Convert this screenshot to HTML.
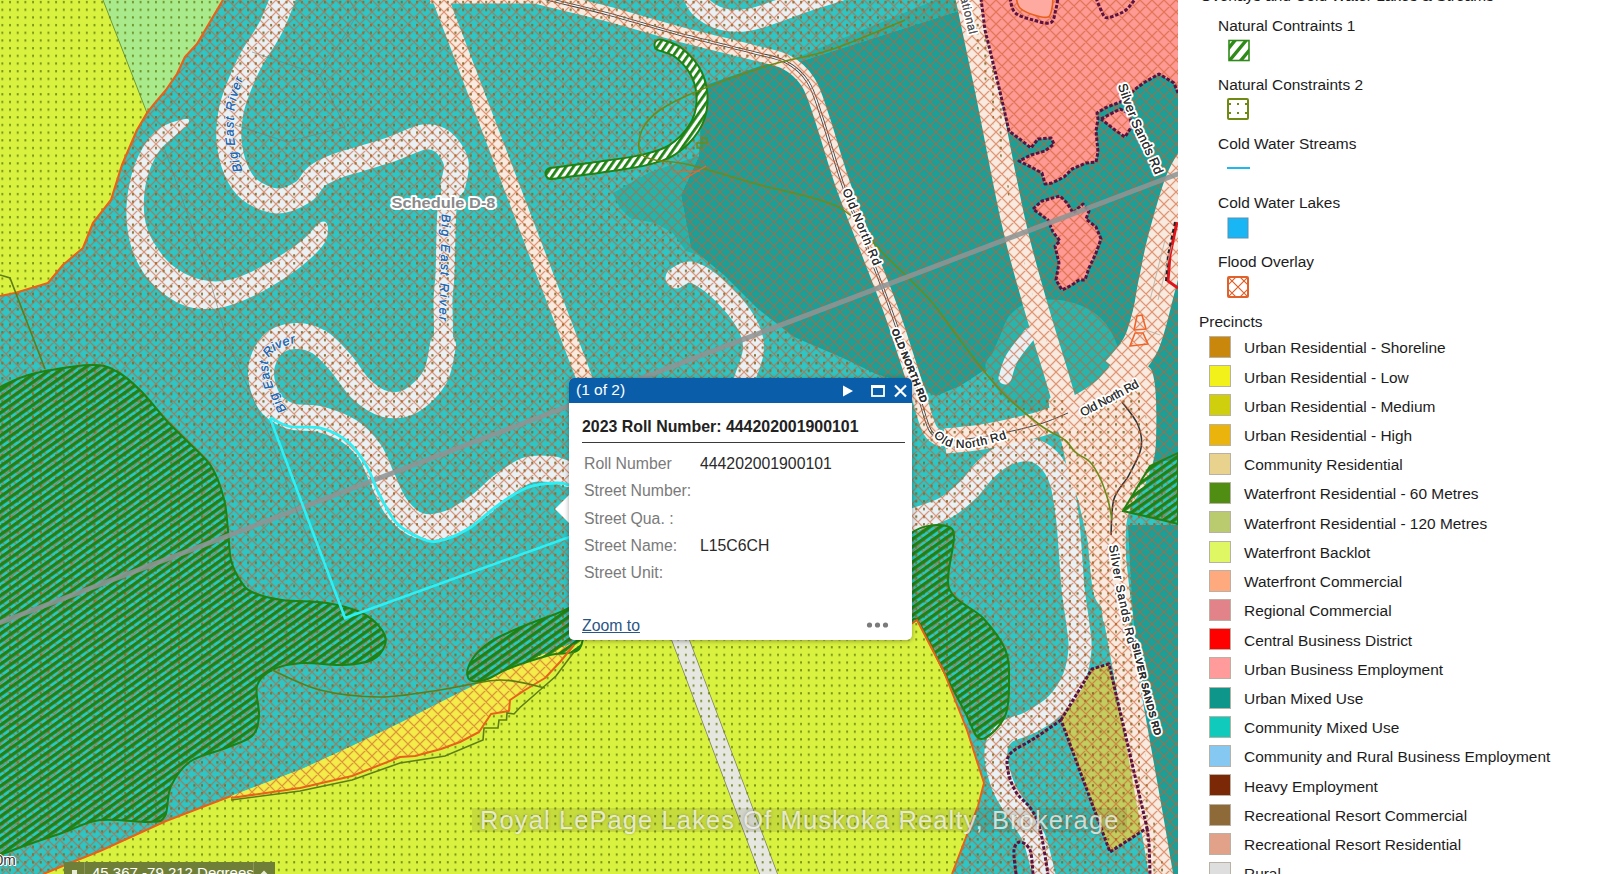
<!DOCTYPE html>
<html lang="en"><head><meta charset="utf-8"><title>Zoning Map</title>
<style>
html,body{margin:0;padding:0;background:#fff;}
body{width:1600px;height:874px;overflow:hidden;position:relative;font-family:"Liberation Sans",sans-serif;color:#1b1b1b;}
#map{position:absolute;left:0;top:0;width:1178px;height:874px;overflow:hidden;}
#map svg{display:block;}
#legend{position:absolute;left:1178px;top:0;width:422px;height:874px;background:#fff;overflow:hidden;}
#legend .t{position:absolute;white-space:nowrap;font-size:15.45px;line-height:18px;color:#1c1c1c;}
#legend .sw{position:absolute;width:20px;height:20px;border:1px solid #b9b2a4;box-sizing:content-box;}
#popup{position:absolute;left:569px;top:378px;width:343px;height:262px;background:#fff;border-radius:5px;box-shadow:0 1px 5px rgba(0,0,0,.35);}
#popup .hd{position:absolute;left:0;top:0;width:343px;height:25px;background:#0a5ea9;border-radius:5px 5px 0 0;color:#fff;}
#popup .hd span{position:absolute;left:7px;top:3px;font-size:15.5px;line-height:18px;}
#popup .ttl{position:absolute;left:13px;top:39.5px;font-size:15.9px;font-weight:bold;line-height:18px;color:#222;white-space:nowrap;}
#popup .hr{position:absolute;left:13px;top:63.5px;width:323px;height:1.2px;background:#3a3a3a;}
#popup .row{position:absolute;left:15px;font-size:15.8px;line-height:18px;color:#7a7a7a;white-space:nowrap;}
#popup .val{position:absolute;left:131px;font-size:15.8px;line-height:18px;color:#2a2a2a;white-space:nowrap;}
#popup .zoom{position:absolute;left:13px;top:239px;font-size:15.8px;line-height:18px;color:#2a5585;text-decoration:underline;}
#popup .dots{position:absolute;left:297px;top:243px;}
#ptr{position:absolute;left:554.5px;top:494.5px;width:0;height:0;border-top:14.5px solid transparent;border-bottom:14.5px solid transparent;border-right:14.5px solid #fff;}
#wm{position:absolute;left:472px;top:808px;height:24px;padding:0 8px;background:rgba(70,70,40,.13);font-size:25.5px;line-height:24px;color:rgba(255,255,255,.72);white-space:nowrap;letter-spacing:1.1px;text-shadow:0 0 3px rgba(90,90,60,.45);}
#coord{position:absolute;left:64px;top:862px;width:211px;height:14px;background:#6f7f38;color:#fff;font-size:15px;line-height:22px;}
#scale{position:absolute;left:-5px;top:851px;font-size:15px;color:#333;text-shadow:-1px 0 #fff,1px 0 #fff,0 1px #fff,0 -1px #fff,1px 1px #fff,-1px -1px #fff;}
</style></head><body>
<div id="map"><svg width="1178" height="874" viewBox="0 0 1178 874">
<defs>
<pattern id="hatch" width="12" height="12" patternUnits="userSpaceOnUse"><path d="M-1,-1L13,13M-1,13L13,-1M-1,11L1,13M11,-1L13,1M11,13L13,11M-1,1L1,-1" stroke="#8a6a5c" stroke-width="2.6" fill="none" stroke-opacity=".07"/><path d="M-1,-1L13,13M-1,13L13,-1M-1,11L1,13M11,-1L13,1M11,13L13,11M-1,1L1,-1" stroke="#d85a28" stroke-width="1.1" fill="none" stroke-opacity=".6"/></pattern>
<pattern id="dots" width="7.68" height="7.68" patternUnits="userSpaceOnUse" patternTransform="translate(-1.5,-2)"><rect x="3" y="3" width="1.7" height="2.2" fill="#5f7a0c" fill-opacity=".9"/></pattern>
<pattern id="dots2" width="7.68" height="7.68" patternUnits="userSpaceOnUse" patternTransform="translate(-1.5,-2)"><rect x="3" y="3" width="1.7" height="2.2" fill="#a4583a" fill-opacity=".6"/></pattern>
<pattern id="gstripe" width="6.2" height="6.2" patternUnits="userSpaceOnUse" patternTransform="rotate(-35.5)"><rect x="0" y="0" width="6.2" height="3.3" fill="#1f8212"/></pattern>
<pattern id="gstripe2" width="6" height="6" patternUnits="userSpaceOnUse" patternTransform="rotate(-55)"><rect x="0" y="0" width="6" height="6" fill="#fff"/><rect x="0" y="0" width="6" height="2.8" fill="#1f8212"/></pattern>
<clipPath id="flood"><path d="M223.0,0.0 L210.0,22.0 L197.0,44.0 L185.0,57.0 L177.0,74.0 L166.0,90.0 L155.0,103.0 L147.0,113.0 L137.0,130.0 L122.0,165.0 L111.0,200.0 L93.0,223.0 L83.0,248.0 L63.0,265.0 L48.0,283.0 L15.0,293.0 L0.0,296.0 L0,874 L43,874 L70.0,863.0 L100.0,851.0 L166.0,821.0 L231.0,796.0 L231.0,798.0 L300.0,788.0 L352.0,776.0 L400.0,757.0 L415.0,756.0 L441.0,749.0 L460.0,742.0 L479.0,732.0 L485.0,723.0 L491.0,714.0 L509.0,711.0 L510.0,700.0 L525.0,690.0 L545.0,678.0 L560.0,662.0 L574.0,645.0 L585,634 L905,628 L917.0,620.0 L944.0,672.0 L967.0,730.0 L984.0,783.0 L978.0,806.0 L952.0,874.0 L1178,874 L1178,0 Z"/></clipPath>
<mask id="nodots" maskUnits="userSpaceOnUse" x="0" y="0" width="1178" height="874"><rect x="0" y="0" width="1178" height="874" fill="#fff"/><path d="M699.0,156.0 L703.0,86.0 L769.0,63.0 L802.0,61.0 L968.0,8.0 L987.0,90.0 L1013.0,220.0 L1034.0,300.0 L1058.0,380.0 L1062.0,395.0 L1010.0,400.0 L986.0,369.0 L960.0,386.0 L936.0,396.0 L912.0,385.0 L876.0,374.0 L843.0,358.0 L794.0,337.0 L757.0,308.0 L724.0,275.0 L701.0,256.0 L691.0,248.0 L681.0,195.0Z" fill="#000"/><path d="M613.0,193.0 L650.0,172.0 L699.0,156.0 L681.0,195.0 L691.0,248.0 L701.0,256.0 L686.0,251.0 L673.0,233.0 L655.0,223.0 L630.0,218.0 L620.0,208.0Z" fill="#000"/><path d="M966.0,-5.0 L1178.0,-5.0 L1178.0,93.0 L1174.0,83.0 L1159.0,74.0 L1145.0,82.0 L1134.0,90.0 L1125.0,100.0 L1105.0,108.0 L1097.0,113.0 L1098.0,119.0 L1096.0,131.0 L1098.0,152.0 L1096.0,162.0 L1086.0,163.0 L1072.0,169.0 L1064.0,177.0 L1052.0,183.0 L1045.0,184.0 L1042.0,173.0 L1031.0,167.0 L1019.0,161.0 L1031.0,155.0 L1045.0,151.0 L1054.0,144.0 L1051.0,138.0 L1038.0,139.0 L1031.0,148.0 L1021.0,140.0 L1009.0,131.0 L999.6,90.0 L985.0,30.0Z" fill="#000"/><path d="M1101.0,119.0 L1120.0,109.0 L1129.0,113.0 L1132.0,126.0 L1125.0,137.0 L1115.0,130.0Z" fill="#000"/><path d="M1033.0,209.0 L1042.0,201.0 L1060.0,196.0 L1067.0,203.0 L1073.0,213.0 L1083.0,204.0 L1089.0,211.0 L1086.0,219.0 L1096.0,227.0 L1101.0,239.0 L1096.0,253.0 L1089.0,268.0 L1085.0,280.0 L1079.0,280.0 L1072.0,285.0 L1062.0,290.0 L1056.0,280.0 L1059.0,263.0 L1055.0,246.0 L1060.0,241.0 L1053.0,232.0 L1048.0,220.0Z" fill="#000"/><path d="M1000.0,120.0 L1178.0,60.0 L1178.0,440.0 L1150.0,440.0 L1140.0,380.0 L1120.0,395.0 L1085.0,415.0 L1073.0,440.0 L1058.0,380.0 L1034.0,300.0 L1013.0,220.0Z" fill="#000"/><path d="M1150.0,380.0 L1178.0,380.0 L1178.0,460.0 L1150.0,462.0Z" fill="#000"/><path d="M1128.0,525.0 L1178.0,525.0 L1178.0,874.0 L1165.0,874.0 L1150.0,800.0 L1140.0,700.0 L1132.0,600.0Z" fill="#000"/><path d="M231.0,796.0 L302.0,769.0 L352.0,746.0 L400.0,723.0 L443.0,701.0 L483.0,681.0 L523.0,663.0 L553.0,650.0 L574.0,643.0 L585.0,634.0 L574.0,645.0 L560.0,662.0 L545.0,678.0 L525.0,690.0 L510.0,700.0 L509.0,711.0 L491.0,714.0 L485.0,723.0 L479.0,732.0 L460.0,742.0 L441.0,749.0 L415.0,756.0 L400.0,757.0 L352.0,776.0 L300.0,788.0 L231.0,798.0Z" fill="#000"/></mask>
</defs>
<rect x="0" y="0" width="1178" height="874" fill="#2ec5c4"/>
<path d="M699.0,156.0 L703.0,86.0 L769.0,63.0 L802.0,61.0 L968.0,8.0 L987.0,90.0 L1013.0,220.0 L1034.0,300.0 L1058.0,380.0 L1062.0,395.0 L1010.0,400.0 L986.0,369.0 L960.0,386.0 L936.0,396.0 L912.0,385.0 L876.0,374.0 L843.0,358.0 L794.0,337.0 L757.0,308.0 L724.0,275.0 L701.0,256.0 L691.0,248.0 L681.0,195.0Z" fill="#1b9f97"/>
<path d="M1000.0,120.0 L1178.0,60.0 L1178.0,440.0 L1150.0,440.0 L1140.0,380.0 L1120.0,395.0 L1085.0,415.0 L1073.0,440.0 L1058.0,380.0 L1034.0,300.0 L1013.0,220.0Z" fill="#1b9f97"/>
<path d="M1150.0,380.0 L1178.0,380.0 L1178.0,460.0 L1150.0,462.0Z" fill="#1b9f97"/>
<path d="M1128.0,525.0 L1178.0,525.0 L1178.0,874.0 L1165.0,874.0 L1150.0,800.0 L1140.0,700.0 L1132.0,600.0Z" fill="#1b9f97"/>
<path d="M613.0,193.0 L650.0,172.0 L699.0,156.0 L681.0,195.0 L691.0,248.0 L701.0,256.0 L686.0,251.0 L673.0,233.0 L655.0,223.0 L630.0,218.0 L620.0,208.0Z" fill="#25b3ab"/>
<path d="M986.0,369.0 C983.2,360.7 990.7,357.5 993.0,352.0 C995.3,346.5 997.2,342.2 1000.0,336.0 C1002.8,329.8 1005.0,320.7 1010.0,315.0 C1015.0,309.3 1021.7,304.5 1030.0,302.0 C1038.3,299.5 1050.0,298.7 1060.0,300.0 C1070.0,301.3 1081.7,305.0 1090.0,310.0 C1098.3,315.0 1105.0,321.7 1110.0,330.0 C1115.0,338.3 1119.7,349.2 1120.0,360.0 C1120.3,370.8 1117.8,385.8 1112.0,395.0 C1106.2,404.2 1093.3,410.8 1085.0,415.0 C1076.7,419.2 1074.5,422.2 1062.0,420.0 C1049.5,417.8 1022.7,410.5 1010.0,402.0 C997.3,393.5 988.8,377.3 986.0,369.0Z" fill="#27b5ad"/>
<path d="M786,62L802,61L968,8L966,-2L940,-2Z" fill="#25b3ad"/>
<path d="M0.0,0.0 L103.0,0.0 L147.0,113.0 L137.0,130.0 L122.0,165.0 L111.0,200.0 L93.0,223.0 L83.0,248.0 L63.0,265.0 L48.0,283.0 L15.0,293.0 L0.0,296.0Z" fill="#d9f240"/>
<path d="M103.0,0.0 L223.0,0.0 L210.0,22.0 L197.0,44.0 L185.0,57.0 L177.0,74.0 L166.0,90.0 L155.0,103.0 L147.0,113.0Z" fill="#a9ea8c"/>
<path d="M43.0,874.0 L70.0,863.0 L100.0,851.0 L166.0,821.0 L231.0,796.0 L302.0,769.0 L352.0,746.0 L400.0,723.0 L443.0,701.0 L483.0,681.0 L523.0,663.0 L553.0,650.0 L574.0,643.0 L585.0,634.0 L905,628 L917.0,620.0 L944.0,672.0 L967.0,730.0 L984.0,783.0 L978.0,806.0 L952.0,874.0 Z" fill="#d9f240"/>
<path d="M231.0,796.0 L302.0,769.0 L352.0,746.0 L400.0,723.0 L443.0,701.0 L483.0,681.0 L523.0,663.0 L553.0,650.0 L574.0,643.0 L585.0,634.0 L574.0,645.0 L560.0,662.0 L545.0,678.0 L525.0,690.0 L510.0,700.0 L509.0,711.0 L491.0,714.0 L485.0,723.0 L479.0,732.0 L460.0,742.0 L441.0,749.0 L415.0,756.0 L400.0,757.0 L352.0,776.0 L300.0,788.0 L231.0,798.0 Z" fill="#f4ec48"/>
<path d="M103,0L147,113" stroke="#5f7d14" stroke-width="1" stroke-opacity=".7" fill="none"/>
<path d="M966.0,-5.0 L1178.0,-5.0 L1178.0,93.0 L1174.0,83.0 L1159.0,74.0 L1145.0,82.0 L1134.0,90.0 L1125.0,100.0 L1105.0,108.0 L1097.0,113.0 L1098.0,119.0 L1096.0,131.0 L1098.0,152.0 L1096.0,162.0 L1086.0,163.0 L1072.0,169.0 L1064.0,177.0 L1052.0,183.0 L1045.0,184.0 L1042.0,173.0 L1031.0,167.0 L1019.0,161.0 L1031.0,155.0 L1045.0,151.0 L1054.0,144.0 L1051.0,138.0 L1038.0,139.0 L1031.0,148.0 L1021.0,140.0 L1009.0,131.0 L999.6,90.0 L985.0,30.0Z" fill="#fe9a93"/>
<path d="M1101.0,119.0 L1120.0,109.0 L1129.0,113.0 L1132.0,126.0 L1125.0,137.0 L1115.0,130.0Z" fill="#fe9a93"/>
<path d="M1033.0,209.0 L1042.0,201.0 L1060.0,196.0 L1067.0,203.0 L1073.0,213.0 L1083.0,204.0 L1089.0,211.0 L1086.0,219.0 L1096.0,227.0 L1101.0,239.0 L1096.0,253.0 L1089.0,268.0 L1085.0,280.0 L1079.0,280.0 L1072.0,285.0 L1062.0,290.0 L1056.0,280.0 L1059.0,263.0 L1055.0,246.0 L1060.0,241.0 L1053.0,232.0 L1048.0,220.0Z" fill="#fe9a93"/>
<path d="M1061.0,720.0 L1092.0,669.0 L1109.0,664.0 L1147.0,828.0 L1110.0,852.0Z" fill="#c3cc5e"/>
<path d="M439,-5L585,380" stroke="#f8eadf" stroke-width="16" fill="none"/>
<path d="M676,628L770.5,879" stroke="#7d8060" stroke-width="17.5" fill="none"/>
<path d="M676,628L770.5,879" stroke="#e6e7e0" stroke-width="16" fill="none"/>
<path d="M185.6,118.9 C181.0,119.5 167.6,122.9 160.4,127.7 C153.2,132.5 147.5,139.9 142.7,147.9 C137.9,155.9 134.1,164.7 131.4,175.6 C128.7,186.5 126.2,200.8 126.4,213.4 C126.6,226.0 128.7,239.8 132.7,251.1 C136.7,262.4 142.3,272.6 150.3,281.4 C158.3,290.2 170.4,299.4 180.5,304.0 C190.6,308.6 200.7,309.4 210.8,309.0 C220.9,308.6 230.9,305.3 241.0,301.5 C251.1,297.7 261.1,292.3 271.2,286.4 C281.3,280.5 292.6,273.3 301.4,266.2 C310.2,259.1 319.7,250.3 324.1,243.6 C328.5,236.9 328.2,229.5 327.6,226.0 C327.0,222.5 324.7,219.9 320.3,222.4 C315.9,224.9 309.6,234.5 301.4,241.0 C293.2,247.5 281.3,255.3 271.2,261.2 C261.1,267.1 250.2,272.9 241.0,276.3 C231.8,279.7 224.2,281.4 215.8,281.4 C207.4,281.4 198.6,279.7 190.6,276.3 C182.6,272.9 174.6,267.9 167.9,261.2 C161.2,254.5 154.3,244.4 150.3,236.0 C146.3,227.6 144.6,220.0 144.0,210.8 C143.4,201.6 144.2,190.2 146.5,180.6 C148.8,170.9 153.1,160.4 157.9,152.9 C162.7,145.4 170.5,140.1 175.5,135.3 C180.5,130.5 186.1,126.9 187.8,124.2 C189.5,121.5 190.2,118.3 185.6,118.9Z" fill="#e9f1f5"/>
<path d="M286.0,-10.0 C283.5,-3.8 276.8,15.3 271.0,27.0 C265.2,38.7 256.5,49.7 251.0,60.0 C245.5,70.3 241.3,80.3 238.0,89.0 C234.7,97.7 232.5,103.5 231.0,112.0 C229.5,120.5 228.2,130.3 229.0,140.0 C229.8,149.7 232.5,161.7 236.0,170.0 C239.5,178.3 243.2,184.8 250.0,190.0 C256.8,195.2 268.2,200.7 277.0,201.0 C285.8,201.3 296.3,196.2 303.0,192.0 C309.7,187.8 311.3,180.3 317.0,176.0 C322.7,171.7 329.8,168.8 337.0,166.0 C344.2,163.2 350.8,161.8 360.0,159.0 C369.2,156.2 381.3,152.7 392.0,149.0 C402.7,145.3 415.5,138.2 424.0,137.0 C432.5,135.8 437.7,137.8 443.0,142.0 C448.3,146.2 454.3,154.8 456.0,162.0 C457.7,169.2 453.5,181.2 453.0,185.0" stroke="#e9f1f5" stroke-width="25" fill="none" stroke-linecap="round" stroke-linejoin="round"/>
<path d="M456.0,162.0 C455.5,165.8 454.5,177.0 453.0,185.0 C451.5,193.0 448.3,195.2 447.0,210.0 C445.7,224.8 445.7,259.0 445.0,274.0 C444.3,289.0 443.3,288.2 443.0,300.0 C442.7,311.8 444.3,332.2 443.0,345.0 C441.7,357.8 436.3,371.7 435.0,377.0" stroke="#e9f1f5" stroke-width="19" fill="none" stroke-linecap="round" stroke-linejoin="round"/>
<path d="M443.0,345.0 C441.7,350.3 440.3,367.7 435.0,377.0 C429.7,386.3 419.3,396.5 411.0,401.0 C402.7,405.5 393.3,406.0 385.0,404.0 C376.7,402.0 368.5,396.0 361.0,389.0 C353.5,382.0 347.0,369.8 340.0,362.0 C333.0,354.2 326.5,346.3 319.0,342.0 C311.5,337.7 302.8,335.5 295.0,336.0 C287.2,336.5 277.7,339.2 272.0,345.0 C266.3,350.8 261.5,361.7 261.0,371.0 C260.5,380.3 264.2,393.5 269.0,401.0 C273.8,408.5 281.7,413.0 290.0,416.0 C298.3,419.0 309.2,416.5 319.0,419.0 C328.8,421.5 340.5,425.5 349.0,431.0 C357.5,436.5 364.5,444.2 370.0,452.0 C375.5,459.8 377.5,468.7 382.0,478.0 C386.5,487.3 390.7,500.0 397.0,508.0 C403.3,516.0 411.2,523.5 420.0,526.0 C428.8,528.5 440.0,526.5 450.0,523.0 C460.0,519.5 471.0,511.5 480.0,505.0 C489.0,498.5 496.0,489.8 504.0,484.0 C512.0,478.2 520.2,472.5 528.0,470.0 C535.8,467.5 544.2,468.3 551.0,469.0 C557.8,469.7 560.8,472.5 569.0,474.0 C577.2,475.5 594.8,477.3 600.0,478.0" stroke="#e9f1f5" stroke-width="26" fill="none" stroke-linecap="round" stroke-linejoin="round"/>
<path d="M690.0,-14.0 C691.7,-10.7 694.7,0.5 700.0,6.0 C705.3,11.5 714.0,16.7 722.0,19.0 C730.0,21.3 739.2,21.2 748.0,20.0 C756.8,18.8 765.5,15.2 775.0,12.0 C784.5,8.8 794.2,4.7 805.0,1.0 C815.8,-2.7 834.2,-8.2 840.0,-10.0" stroke="#e9f1f5" stroke-width="22" fill="none" stroke-linecap="round" stroke-linejoin="round"/>
<path d="M676.0,278.0 C678.3,277.0 684.2,271.2 690.0,272.0 C695.8,272.8 703.3,277.0 711.0,283.0 C718.7,289.0 729.3,299.7 736.0,308.0 C742.7,316.3 748.2,325.5 751.0,333.0 C753.8,340.5 754.0,345.5 753.0,353.0 C752.0,360.5 747.5,370.2 745.0,378.0 C742.5,385.8 739.2,396.3 738.0,400.0" stroke="#e9f1f5" stroke-width="21" fill="none" stroke-linecap="round" stroke-linejoin="round"/>
<path d="M900.0,524.0 C902.2,523.3 905.5,522.7 913.0,520.0 C920.5,517.3 935.8,513.0 945.0,508.0 C954.2,503.0 961.2,496.5 968.0,490.0 C974.8,483.5 979.5,475.0 986.0,469.0 C992.5,463.0 999.5,457.2 1007.0,454.0 C1014.5,450.8 1024.0,449.0 1031.0,450.0 C1038.0,451.0 1044.0,454.8 1049.0,460.0 C1054.0,465.2 1058.0,472.0 1061.0,481.0 C1064.0,490.0 1065.5,503.0 1067.0,514.0 C1068.5,525.0 1069.0,534.7 1070.0,547.0 C1071.0,559.3 1071.7,575.0 1073.0,588.0 C1074.3,601.0 1076.8,614.8 1078.0,625.0 C1079.2,635.2 1080.7,640.2 1080.0,649.0 C1079.3,657.8 1077.8,668.8 1074.0,678.0 C1070.2,687.2 1064.2,696.7 1057.0,704.0 C1049.8,711.3 1039.7,717.2 1031.0,722.0 C1022.3,726.8 1010.8,728.2 1005.0,733.0 C999.2,737.8 996.5,742.7 996.0,751.0 C995.5,759.3 998.7,773.3 1002.0,783.0 C1005.3,792.7 1010.7,799.8 1016.0,809.0 C1021.3,818.2 1029.2,826.2 1034.0,838.0 C1038.8,849.8 1043.2,873.0 1045.0,880.0" stroke="#e9f1f5" stroke-width="23" fill="none" stroke-linecap="round" stroke-linejoin="round"/>
<path d="M1030.0,334.0 C1027.0,338.0 1016.2,350.7 1012.0,358.0 C1007.8,365.3 1006.2,374.7 1005.0,378.0" stroke="#e9f1f5" stroke-width="13" fill="none" stroke-linecap="round" stroke-linejoin="round"/>
<path d="M964.0,-16.0 C964.7,-13.3 964.2,-17.7 968.0,0.0 C971.8,17.7 979.5,53.3 987.0,90.0 C994.5,126.7 1005.2,185.0 1013.0,220.0 C1020.8,255.0 1026.5,273.3 1034.0,300.0 C1041.5,326.7 1051.2,356.7 1058.0,380.0 C1064.8,403.3 1070.0,421.7 1075.0,440.0 C1080.0,458.3 1083.5,471.7 1088.0,490.0 C1092.5,508.3 1097.3,528.3 1102.0,550.0 C1106.7,571.7 1110.7,591.7 1116.0,620.0 C1121.3,648.3 1128.3,688.3 1134.0,720.0 C1139.7,751.7 1145.3,783.3 1150.0,810.0 C1154.7,836.7 1160.0,868.3 1162.0,880.0" stroke="#f8eadf" stroke-width="24" fill="none"/>
<path d="M1118.0,395.0 C1119.2,400.8 1124.3,417.5 1125.0,430.0 C1125.7,442.5 1124.2,457.5 1122.0,470.0 C1119.8,482.5 1114.0,492.5 1112.0,505.0 C1110.0,517.5 1109.0,525.8 1110.0,545.0 C1111.0,564.2 1116.7,607.5 1118.0,620.0" stroke="#f8eadf" stroke-width="30" fill="none"/>
<path d="M945.0,441.0 C950.0,440.5 965.3,439.3 975.0,438.0 C984.7,436.7 992.2,435.3 1003.0,433.0 C1013.8,430.7 1029.2,427.3 1040.0,424.0 C1050.8,420.7 1056.7,419.2 1068.0,413.0 C1079.3,406.8 1096.3,398.8 1108.0,387.0 C1119.7,375.2 1130.8,359.5 1138.0,342.0 C1145.2,324.5 1147.3,299.0 1151.0,282.0 C1154.7,265.0 1155.5,257.0 1160.0,240.0 C1164.5,223.0 1172.2,195.0 1178.0,180.0 C1183.8,165.0 1192.2,155.0 1195.0,150.0" stroke="#f8eadf" stroke-width="25" fill="none"/>
<path d="M1120.0,372.0 C1123.7,367.0 1135.7,356.5 1142.0,342.0 C1148.3,327.5 1153.0,302.8 1158.0,285.0 C1163.0,267.2 1165.0,251.7 1172.0,235.0 C1179.0,218.3 1195.3,193.3 1200.0,185.0" stroke="#f8eadf" stroke-width="36" fill="none"/>
<path d="M520.0,-8.0 C525.2,-6.7 536.3,-3.7 551.0,0.0 C565.7,3.7 586.7,8.3 608.0,14.0 C629.3,19.7 655.2,27.7 679.0,34.0 C702.8,40.3 733.2,47.3 751.0,52.0 C768.8,56.7 776.5,57.0 786.0,62.0 C795.5,67.0 802.0,72.7 808.0,82.0 C814.0,91.3 816.2,100.8 822.0,118.0 C827.8,135.2 835.3,163.0 843.0,185.0 C850.7,207.0 859.7,228.2 868.0,250.0 C876.3,271.8 884.8,292.7 893.0,316.0 C901.2,339.3 910.8,371.0 917.0,390.0 C923.2,409.0 925.3,421.5 930.0,430.0 C934.7,438.5 942.5,439.2 945.0,441.0" stroke="#f8eadf" stroke-width="15" fill="none"/>
<path d="M1049.0,400.0 C1051.3,392.5 1064.8,397.5 1075.0,395.0 C1085.2,392.5 1097.5,389.5 1110.0,385.0 C1122.5,380.5 1142.3,358.8 1150.0,368.0 C1157.7,377.2 1156.5,421.3 1156.0,440.0 C1155.5,458.7 1151.8,466.7 1147.0,480.0 C1142.2,493.3 1130.8,500.0 1127.0,520.0 C1123.2,540.0 1129.2,586.7 1124.0,600.0 C1118.8,613.3 1102.5,613.3 1096.0,600.0 C1089.5,586.7 1089.3,540.0 1085.0,520.0 C1080.7,500.0 1074.0,493.3 1070.0,480.0 C1066.0,466.7 1064.5,453.3 1061.0,440.0 C1057.5,426.7 1046.7,407.5 1049.0,400.0Z" fill="#f8eadf"/>
<path d="M430,0L556,0" stroke="#f8eadf" stroke-width="7" fill="none"/>
<path d="M520.0,-8.0 C525.2,-6.7 536.3,-3.7 551.0,0.0 C565.7,3.7 586.7,8.3 608.0,14.0 C629.3,19.7 655.2,27.7 679.0,34.0 C702.8,40.3 733.2,47.3 751.0,52.0 C768.8,56.7 776.5,57.0 786.0,62.0 C795.5,67.0 802.0,72.7 808.0,82.0 C814.0,91.3 816.2,100.8 822.0,118.0 C827.8,135.2 835.3,163.0 843.0,185.0 C850.7,207.0 859.7,228.2 868.0,250.0 C876.3,271.8 884.8,292.7 893.0,316.0 C901.2,339.3 910.8,371.0 917.0,390.0 C923.2,409.0 925.3,421.5 930.0,430.0 C934.7,438.5 942.5,439.2 945.0,441.0" stroke="#3a3a3a" stroke-width="3" fill="none"/>
<path d="M520.0,-8.0 C525.2,-6.7 536.3,-3.7 551.0,0.0 C565.7,3.7 586.7,8.3 608.0,14.0 C629.3,19.7 655.2,27.7 679.0,34.0 C702.8,40.3 733.2,47.3 751.0,52.0 C768.8,56.7 776.5,57.0 786.0,62.0 C795.5,67.0 802.0,72.7 808.0,82.0 C814.0,91.3 816.2,100.8 822.0,118.0 C827.8,135.2 835.3,163.0 843.0,185.0 C850.7,207.0 859.7,228.2 868.0,250.0 C876.3,271.8 884.8,292.7 893.0,316.0 C901.2,339.3 910.8,371.0 917.0,390.0 C923.2,409.0 925.3,421.5 930.0,430.0 C934.7,438.5 942.5,439.2 945.0,441.0" stroke="#f3f3f3" stroke-width="1.4" fill="none"/>
<path d="M945.0,441.0 C950.0,440.5 965.3,439.3 975.0,438.0 C984.7,436.7 992.2,435.3 1003.0,433.0 C1013.8,430.7 1029.2,427.3 1040.0,424.0 C1050.8,420.7 1063.3,414.8 1068.0,413.0" stroke="#444" stroke-width="1" fill="none"/>
<path d="M1122.0,402.0 C1124.7,405.8 1134.8,417.3 1138.0,425.0 C1141.2,432.7 1142.5,439.7 1141.0,448.0 C1139.5,456.3 1133.5,466.5 1129.0,475.0 C1124.5,483.5 1117.0,489.0 1114.0,499.0 C1111.0,509.0 1111.5,529.0 1111.0,535.0" stroke="#333" stroke-width="1.6" fill="none"/>
<rect x="0" y="0" width="1178" height="874" fill="url(#dots)" mask="url(#nodots)"/>
<g clip-path="url(#flood)"><rect x="0" y="0" width="1178" height="874" fill="url(#dots2)" mask="url(#nodots)"/></g>
<rect x="0" y="0" width="1178" height="874" fill="url(#hatch)" clip-path="url(#flood)"/>
<path d="M0.0,387.0 C5.3,384.8 17.0,377.7 32.0,374.0 C47.0,370.3 76.0,365.5 90.0,365.0 C104.0,364.5 107.5,366.7 116.0,371.0 C124.5,375.3 132.7,382.8 141.0,391.0 C149.3,399.2 158.5,411.8 166.0,420.0 C173.5,428.2 178.5,432.3 186.0,440.0 C193.5,447.7 204.7,456.2 211.0,466.0 C217.3,475.8 221.2,488.3 224.0,499.0 C226.8,509.7 226.8,519.8 228.0,530.0 C229.2,540.2 229.0,551.7 231.0,560.0 C233.0,568.3 236.5,574.7 240.0,580.0 C243.5,585.3 245.0,588.7 252.0,592.0 C259.0,595.3 269.5,598.2 282.0,600.0 C294.5,601.8 313.7,600.8 327.0,603.0 C340.3,605.2 352.8,608.5 362.0,613.0 C371.2,617.5 378.2,624.7 382.0,630.0 C385.8,635.3 386.7,640.0 385.0,645.0 C383.3,650.0 379.2,656.7 372.0,660.0 C364.8,663.3 353.7,664.5 342.0,665.0 C330.3,665.5 313.7,662.2 302.0,663.0 C290.3,663.8 279.5,666.2 272.0,670.0 C264.5,673.8 259.2,678.3 257.0,686.0 C254.8,693.7 259.8,707.7 259.0,716.0 C258.2,724.3 257.5,730.7 252.0,736.0 C246.5,741.3 236.2,743.8 226.0,748.0 C215.8,752.2 200.2,754.7 191.0,761.0 C181.8,767.3 175.3,776.8 171.0,786.0 C166.7,795.2 168.5,810.0 165.0,816.0 C161.5,822.0 160.8,821.3 150.0,822.0 C139.2,822.7 114.7,818.2 100.0,820.0 C85.3,821.8 74.7,828.7 62.0,833.0 C49.3,837.3 34.3,842.3 24.0,846.0 C13.7,849.7 4.0,853.5 0.0,855.0 L-6,858 L-6,387 Z" fill="url(#gstripe)" stroke="#1f8212" stroke-width="2"/>
<path d="M468.0,668.0 C469.7,663.0 474.2,655.5 480.0,650.0 C485.8,644.5 490.8,640.8 503.0,635.0 C515.2,629.2 540.2,619.5 553.0,615.0 C565.8,610.5 575.5,602.5 580.0,608.0 C584.5,613.5 585.0,640.2 580.0,648.0 C575.0,655.8 561.7,651.7 550.0,655.0 C538.3,658.3 520.8,663.8 510.0,668.0 C499.2,672.2 491.7,678.0 485.0,680.0 C478.3,682.0 472.8,682.0 470.0,680.0 C467.2,678.0 466.3,673.0 468.0,668.0Z" fill="url(#gstripe)" stroke="#1f8212" stroke-width="2"/>
<path d="M905.0,541.0 C912.8,524.5 944.7,521.2 952.0,529.0 C959.3,536.8 943.8,573.2 949.0,588.0 C954.2,602.8 973.7,607.8 983.0,618.0 C992.3,628.2 1000.7,639.0 1005.0,649.0 C1009.3,659.0 1009.0,666.8 1009.0,678.0 C1009.0,689.2 1009.7,705.8 1005.0,716.0 C1000.3,726.2 987.7,739.7 981.0,739.0 C974.3,738.3 971.2,723.2 965.0,712.0 C958.8,700.8 952.0,687.3 944.0,672.0 C936.0,656.7 923.5,627.3 917.0,620.0 C910.5,612.7 907.0,641.2 905.0,628.0 C903.0,614.8 897.2,557.5 905.0,541.0Z" fill="url(#gstripe)" stroke="#1f8212" stroke-width="2"/>
<path d="M1123.0,511.0 L1150.0,466.0 L1178.0,453.0 L1178.0,524.0 L1162.0,520.0Z" fill="url(#gstripe)" stroke="#1f8212" stroke-width="2"/>
<path d="M551.0,173.5 C559.3,172.4 585.5,169.2 601.0,167.0 C616.5,164.8 632.2,162.8 644.0,160.0 C655.8,157.2 663.7,155.3 672.0,150.0 C680.3,144.7 689.0,135.8 694.0,128.0 C699.0,120.2 701.5,111.8 702.0,103.0 C702.5,94.2 700.8,83.3 697.0,75.0 C693.2,66.7 685.2,58.0 679.0,53.0 C672.8,48.0 663.2,46.3 660.0,45.0" stroke="#1f8212" stroke-width="13" fill="none" stroke-linecap="round"/>
<path d="M551.0,173.5 C559.3,172.4 585.5,169.2 601.0,167.0 C616.5,164.8 632.2,162.8 644.0,160.0 C655.8,157.2 663.7,155.3 672.0,150.0 C680.3,144.7 689.0,135.8 694.0,128.0 C699.0,120.2 701.5,111.8 702.0,103.0 C702.5,94.2 700.8,83.3 697.0,75.0 C693.2,66.7 685.2,58.0 679.0,53.0 C672.8,48.0 663.2,46.3 660.0,45.0" stroke="url(#gstripe2)" stroke-width="9" fill="none" stroke-linecap="round"/>
<path d="M223.0,0.0 L210.0,22.0 L197.0,44.0 L185.0,57.0 L177.0,74.0 L166.0,90.0 L155.0,103.0 L147.0,113.0 L137.0,130.0 L122.0,165.0 L111.0,200.0 L93.0,223.0 L83.0,248.0 L63.0,265.0 L48.0,283.0 L15.0,293.0 L0.0,296.0" stroke="#e8601a" stroke-width="2.2" fill="none" stroke-linejoin="round"/>
<path d="M43.0,874.0 L70.0,863.0 L100.0,851.0 L166.0,821.0 L231.0,796.0" stroke="#e8601a" stroke-width="2.2" fill="none" stroke-linejoin="round"/>
<path d="M231.0,798.0 L300.0,788.0 L352.0,776.0 L400.0,757.0 L415.0,756.0 L441.0,749.0 L460.0,742.0 L479.0,732.0 L485.0,723.0 L491.0,714.0 L509.0,711.0 L510.0,700.0 L525.0,690.0 L545.0,678.0 L560.0,662.0 L574.0,645.0" stroke="#e8601a" stroke-width="2" fill="none" stroke-linejoin="round"/>
<path d="M905.0,628.0 L917.0,620.0 L944.0,672.0 L967.0,730.0 L984.0,783.0 L978.0,806.0 L952.0,874.0" stroke="#e8601a" stroke-width="2" fill="none" stroke-linejoin="round"/>
<path d="M0.0,275.0 L10.0,278.0 L45.0,369.0" stroke="#5f7d14" stroke-width="1.6" fill="none"/>
<path d="M272.0,670.0 C280.0,673.3 302.0,685.5 320.0,690.0 C338.0,694.5 360.0,697.0 380.0,697.0 C400.0,697.0 420.0,692.8 440.0,690.0 C460.0,687.2 482.5,680.3 500.0,680.0 C517.5,679.7 537.5,686.7 545.0,688.0" stroke="#5f7d14" stroke-width="1.6" fill="none"/>
<path d="M231.0,800.0 L300.0,791.0 L352.0,780.0 L400.0,763.0 L445.0,756.0 L483.0,740.0 L484.0,728.0 L498.0,728.0 L499.0,720.0 L506.5,720.0 L507.0,713.0 L514.0,714.0 L520.0,707.5 L540.0,690.0 L556.0,676.0 L574.0,652.0" stroke="#5f7d14" stroke-width="1.6" fill="none"/>
<path d="M905.0,20.0 C892.5,25.0 852.5,42.5 830.0,50.0 C807.5,57.5 791.7,58.3 770.0,65.0 C748.3,71.7 718.3,82.5 700.0,90.0 C681.7,97.5 669.7,103.3 660.0,110.0 C650.3,116.7 645.3,123.0 642.0,130.0 C638.7,137.0 637.8,147.0 640.0,152.0 C642.2,157.0 646.7,157.8 655.0,160.0 C663.3,162.2 672.5,160.8 690.0,165.0 C707.5,169.2 738.3,179.2 760.0,185.0 C781.7,190.8 805.0,195.0 820.0,200.0 C835.0,205.0 840.0,206.7 850.0,215.0 C860.0,223.3 866.7,235.8 880.0,250.0 C893.3,264.2 916.7,285.0 930.0,300.0 C943.3,315.0 948.3,325.0 960.0,340.0 C971.7,355.0 986.7,375.8 1000.0,390.0 C1013.3,404.2 1029.2,416.7 1040.0,425.0 C1050.8,433.3 1059.2,435.5 1065.0,440.0 C1070.8,444.5 1070.8,448.3 1075.0,452.0 C1079.2,455.7 1085.8,457.7 1090.0,462.0 C1094.2,466.3 1097.0,471.7 1100.0,478.0 C1103.0,484.3 1106.0,493.0 1108.0,500.0 C1110.0,507.0 1111.3,516.7 1112.0,520.0" stroke="#6e8a16" stroke-width="1.6" fill="none"/>
<path d="M697,143h5v-5h5v5h-5v5h-5z" stroke="#6e8a16" stroke-width="1.3" fill="none"/><path d="M683,180L706,166" stroke="#f0642a" stroke-width="1.4" fill="none"/><path d="M672,172L700,171" stroke="#f0642a" stroke-width="1" fill="none"/>
<path d="M1178.0,93.0 L1174.0,83.0 L1159.0,74.0 L1145.0,82.0 L1134.0,90.0 L1125.0,100.0 L1105.0,108.0 L1097.0,113.0 L1098.0,119.0 L1096.0,131.0 L1098.0,152.0 L1096.0,162.0 L1086.0,163.0 L1072.0,169.0 L1064.0,177.0 L1052.0,183.0 L1045.0,184.0 L1042.0,173.0 L1031.0,167.0 L1019.0,161.0 L1031.0,155.0 L1045.0,151.0 L1054.0,144.0 L1051.0,138.0 L1038.0,139.0 L1031.0,148.0 L1021.0,140.0 L1009.0,131.0 L999.6,90.0 L985.0,30.0 L980.5,-5.0" stroke="#5b1240" stroke-width="3" stroke-dasharray="3.5 1.8" fill="none" stroke-linejoin="round"/>
<path d="M1101.0,119.0 L1120.0,109.0 L1129.0,113.0 L1132.0,126.0 L1125.0,137.0 L1115.0,130.0 L1101.0,119.0" stroke="#5b1240" stroke-width="3" stroke-dasharray="3.5 1.8" fill="none" stroke-linejoin="round"/>
<path d="M1033.0,209.0 L1042.0,201.0 L1060.0,196.0 L1067.0,203.0 L1073.0,213.0 L1083.0,204.0 L1089.0,211.0 L1086.0,219.0 L1096.0,227.0 L1101.0,239.0 L1096.0,253.0 L1089.0,268.0 L1085.0,280.0 L1079.0,280.0 L1072.0,285.0 L1062.0,290.0 L1056.0,280.0 L1059.0,263.0 L1055.0,246.0 L1060.0,241.0 L1053.0,232.0 L1048.0,220.0 L1033.0,209.0" stroke="#5b1240" stroke-width="3" stroke-dasharray="3.5 1.8" fill="none" stroke-linejoin="round"/>
<path d="M1061.0,720.0 L1092.0,669.0 L1109.0,664.0 L1147.0,828.0 L1110.0,852.0 L1061.0,720.0" stroke="#5b1240" stroke-width="3" stroke-dasharray="3.5 1.8" fill="none" stroke-linejoin="round"/>
<path d="M1016.0,-3.0 C1016.7,-1.2 1017.0,5.0 1020.0,8.0 C1023.0,11.0 1029.3,13.5 1034.0,15.0 C1038.7,16.5 1045.0,18.2 1048.0,17.0 C1051.0,15.8 1051.2,11.3 1052.0,8.0 C1052.8,4.7 1052.8,-1.2 1053.0,-3.0" fill="#ffaaa0" stroke="#e8601a" stroke-width="1.6"/>
<path d="M1061.0,720.0 C1056.7,723.0 1043.5,732.3 1035.0,738.0 C1026.5,743.7 1014.5,748.5 1010.0,754.0 C1005.5,759.5 1007.0,764.7 1008.0,771.0 C1009.0,777.3 1012.2,785.7 1016.0,792.0 C1019.8,798.3 1027.0,802.8 1031.0,809.0 C1035.0,815.2 1037.2,818.2 1040.0,829.0 C1042.8,839.8 1046.7,866.5 1048.0,874.0" stroke="#5b1240" stroke-width="3" stroke-dasharray="3.5 1.8" fill="none"/>
<path d="M1147.0,828.0 C1147.3,830.7 1148.5,836.3 1149.0,844.0 C1149.5,851.7 1149.8,869.0 1150.0,874.0" stroke="#5b1240" stroke-width="3" stroke-dasharray="3.5 1.8" fill="none"/>
<path d="M1016.0,874.0 C1015.7,870.0 1013.3,855.3 1014.0,850.0 C1014.7,844.7 1017.3,842.0 1020.0,842.0 C1022.7,842.0 1027.8,844.7 1030.0,850.0 C1032.2,855.3 1032.5,870.0 1033.0,874.0" stroke="#5b1240" stroke-width="3" stroke-dasharray="3.5 1.8" fill="none"/>
<path d="M1010.0,-2.0 C1010.8,0.4 1011.2,8.9 1015.0,12.6 C1018.8,16.3 1027.0,18.3 1033.0,20.0 C1039.0,21.7 1046.9,24.3 1050.7,22.6 C1054.5,20.9 1054.5,14.1 1055.7,10.0 C1056.9,5.9 1057.6,0.0 1058.0,-2.0" stroke="#5b1240" stroke-width="3" stroke-dasharray="3.5 1.8" fill="none"/>
<path d="M1096.0,-2.0 C1096.8,0.0 1099.3,6.7 1101.0,10.0 C1102.7,13.3 1103.5,16.8 1106.0,17.6 C1108.5,18.4 1112.7,16.3 1116.0,15.0 C1119.3,13.7 1122.7,12.8 1126.0,10.0 C1129.3,7.2 1134.3,0.0 1136.0,-2.0" stroke="#5b1240" stroke-width="3" stroke-dasharray="3.5 1.8" fill="none"/>
<path d="M1177,222L1170,255L1168,281L1178,288" stroke="#e0141a" stroke-width="3" fill="none"/><path d="M1175,222L1168,255L1166,281" stroke="#222" stroke-width="2" stroke-dasharray="4 3" fill="none"/>
<path d="M1134,330L1137,316L1142,315L1146,329Z M1130,346L1135,333L1143,333L1148,344Z" stroke="#f0642a" stroke-width="1.6" fill="none" stroke-linejoin="round"/>
<path d="M1150,300L1165,240M1158,300L1172,245M1146,330L1160,335" stroke="#b8aca0" stroke-width=".8" fill="none"/>
<path d="M-5,624.5L1183,171.9" stroke="#8f9494" stroke-width="5" stroke-opacity=".88" fill="none"/>
<path d="M252,52L320,75L345,127L287,142L235,125M320,75L357,15L350,0M165,150L207,270L227,340L270,437M270,437L300,520L345,618" stroke="#7d7a70" stroke-width=".8" stroke-opacity=".7" fill="none"/>
<path d="M270.2,417.5 C273.4,419.0 280.8,424.7 289.5,426.5 C298.2,428.3 312.3,425.8 322.2,428.5 C332.1,431.2 341.6,436.4 349.0,442.8 C356.4,449.2 361.9,458.2 366.9,466.6 C371.9,475.0 373.9,484.0 378.8,493.4 C383.8,502.8 389.7,515.6 396.6,523.0 C403.5,530.4 413.4,535.0 420.4,538.0 C427.3,541.0 430.4,542.5 438.3,541.0 C446.2,539.5 458.1,535.0 468.0,529.0 C477.9,523.0 487.9,512.2 497.8,505.3 C507.7,498.4 517.6,491.2 527.5,487.5 C537.4,483.8 549.9,483.2 557.3,483.0 C564.7,482.8 569.5,485.5 572.0,486.0" stroke="#2cf0f6" stroke-width="2.8" fill="none"/>
<path d="M270,418L345,618L575,535" stroke="#2cf0f6" stroke-width="2.6" fill="none" stroke-linejoin="miter"/>
<g font-family="'Liberation Sans',sans-serif"><text x="443.5" y="207.5" text-anchor="middle" font-size="15.5" font-weight="bold" fill="#8a8a8a" stroke="#fff" stroke-width="4" stroke-linejoin="round" paint-order="stroke" textLength="104" lengthAdjust="spacingAndGlyphs">Schedule D-8</text><g font-style="italic" fill="#2468b4" stroke="#e9f1f5" stroke-width="1.6" paint-order="stroke" stroke-linejoin="round"><path id="lb1" d="M238.0,172.0 C236.7,166.7 231.2,151.2 230.0,140.0 C228.8,128.8 229.3,115.8 231.0,105.0 C232.7,94.2 236.5,84.5 240.0,75.0 C243.5,65.5 250.0,52.5 252.0,48.0" fill="none" stroke="none"/><text font-size="12.5"  dy="0.34em" aria-hidden="true" class="halo"><textPath href="#lb1" textLength="97" lengthAdjust="spacing">Big East River</textPath></text><text font-size="12.5"  dy="0.34em" stroke="none"><textPath href="#lb1" textLength="97" lengthAdjust="spacing">Big East River</textPath></text><path id="lb2" d="M446.0,214.0 C445.8,223.3 445.5,250.7 445.0,270.0 C444.5,289.3 443.3,320.0 443.0,330.0" fill="none" stroke="none"/><text font-size="12.5"  dy="0.34em" aria-hidden="true" class="halo"><textPath href="#lb2" textLength="107" lengthAdjust="spacing">Big East River</textPath></text><text font-size="12.5"  dy="0.34em" stroke="none"><textPath href="#lb2" textLength="107" lengthAdjust="spacing">Big East River</textPath></text><path id="lb3" d="M283.0,412.0 C280.5,407.5 271.2,393.7 268.0,385.0 C264.8,376.3 262.7,366.7 264.0,360.0 C265.3,353.3 269.0,348.8 276.0,345.0 C283.0,341.2 297.0,337.5 306.0,337.0 C315.0,336.5 326.0,341.2 330.0,342.0" fill="none" stroke="none"/><text font-size="12.5"  dy="0.34em" aria-hidden="true" class="halo"><textPath href="#lb3" textLength="96" lengthAdjust="spacing">Big East River</textPath></text><text font-size="12.5"  dy="0.34em" stroke="none"><textPath href="#lb3" textLength="96" lengthAdjust="spacing">Big East River</textPath></text></g><g fill="#2e2e2e" stroke="#fff" stroke-width="4" paint-order="stroke" stroke-linejoin="round"><path id="lb4" d="M846.0,189.0 L879.0,268.0" fill="none" stroke="none"/><text font-size="12"  dy="0.34em" aria-hidden="true" class="halo"><textPath href="#lb4" textLength="82" lengthAdjust="spacing">Old North Rd</textPath></text><text font-size="12"  dy="0.34em" stroke="none"><textPath href="#lb4" textLength="82" lengthAdjust="spacing">Old North Rd</textPath></text><path id="lb5" d="M894.5,329.0 L925.0,403.5" fill="none" stroke="none"/><text font-size="10" font-weight="bold" dy="0.34em" aria-hidden="true" class="halo"><textPath href="#lb5" textLength="79" lengthAdjust="spacing">OLD NORTH RD</textPath></text><text font-size="10" font-weight="bold" dy="0.34em" stroke="none"><textPath href="#lb5" textLength="79" lengthAdjust="spacing">OLD NORTH RD</textPath></text><path id="lb6" d="M936.0,433.0 C938.0,434.5 943.2,440.2 948.0,442.0 C952.8,443.8 958.2,444.4 965.0,444.0 C971.8,443.6 981.5,441.3 989.0,439.5 C996.5,437.7 1006.5,434.1 1010.0,433.0" fill="none" stroke="none"/><text font-size="12"  dy="0.34em" aria-hidden="true" class="halo"><textPath href="#lb6" textLength="74" lengthAdjust="spacing">Old North Rd</textPath></text><text font-size="12"  dy="0.34em" stroke="none"><textPath href="#lb6" textLength="74" lengthAdjust="spacing">Old North Rd</textPath></text><path id="lb7" d="M1081.0,413.0 C1085.8,410.5 1100.3,403.2 1110.0,398.0 C1119.7,392.8 1134.2,384.7 1139.0,382.0" fill="none" stroke="none"/><text font-size="12"  dy="0.34em" aria-hidden="true" class="halo"><textPath href="#lb7" textLength="64" lengthAdjust="spacing">Old North Rd</textPath></text><text font-size="12"  dy="0.34em" stroke="none"><textPath href="#lb7" textLength="64" lengthAdjust="spacing">Old North Rd</textPath></text><path id="lb8" d="M1122.0,84.0 C1124.2,90.0 1130.3,108.7 1135.0,120.0 C1139.7,131.3 1145.8,142.8 1150.0,152.0 C1154.2,161.2 1158.3,171.2 1160.0,175.0" fill="none" stroke="none"/><text font-size="13"  dy="0.34em" aria-hidden="true" class="halo"><textPath href="#lb8" textLength="97" lengthAdjust="spacing">Silver Sands Rd</textPath></text><text font-size="13"  dy="0.34em" stroke="none"><textPath href="#lb8" textLength="97" lengthAdjust="spacing">Silver Sands Rd</textPath></text><path id="lb9" d="M1113.0,545.0 C1114.0,550.8 1116.7,567.5 1119.0,580.0 C1121.3,592.5 1124.7,608.7 1127.0,620.0 C1129.3,631.3 1132.0,643.3 1133.0,648.0" fill="none" stroke="none"/><text font-size="12"  dy="0.34em" aria-hidden="true" class="halo"><textPath href="#lb9" textLength="100" lengthAdjust="spacing">Silver Sands Rd</textPath></text><text font-size="12"  dy="0.34em" stroke="none"><textPath href="#lb9" textLength="100" lengthAdjust="spacing">Silver Sands Rd</textPath></text><path id="lb10" d="M1135.0,643.0 C1136.8,650.8 1142.2,674.7 1146.0,690.0 C1149.8,705.3 1156.0,727.5 1158.0,735.0" fill="none" stroke="none"/><text font-size="10" font-weight="bold" dy="0.34em" aria-hidden="true" class="halo"><textPath href="#lb10" textLength="95" lengthAdjust="spacing">SILVER SANDS RD</textPath></text><text font-size="10" font-weight="bold" dy="0.34em" stroke="none"><textPath href="#lb10" textLength="95" lengthAdjust="spacing">SILVER SANDS RD</textPath></text><path id="lb11" d="M962.0,-12.0 C963.3,-6.7 967.3,9.3 970.0,20.0 C972.7,30.7 976.7,46.7 978.0,52.0" fill="none" stroke="none"/><text font-size="12" fill="#555" dy="0.34em" aria-hidden="true" class="halo"><textPath href="#lb11" textLength="47" lengthAdjust="spacing">National</textPath></text><text font-size="12" fill="#555" dy="0.34em" stroke="none"><textPath href="#lb11" textLength="47" lengthAdjust="spacing">National</textPath></text></g></g>
</svg></div>
<div id="scale">0m</div>
<div id="coord"><i style="position:absolute;left:20px;top:0;width:1px;height:14px;background:#8a965c"></i><i style="position:absolute;left:189px;top:0;width:1px;height:14px;background:#8a965c"></i><i style="position:absolute;left:8px;top:8px;width:5px;height:6px;background:#e8ecd8"></i><span style="position:absolute;left:28px;top:0">45.367 -79.212 Degrees</span><svg width="16" height="8" viewBox="0 0 16 8" style="position:absolute;left:192px;top:8px"><path d="M2,8L8,2L14,8" stroke="#e8ecd8" stroke-width="2" fill="none"/></svg></div>
<div id="wm">Royal LePage Lakes Of Muskoka Realty, Brokerage</div>
<div id="ptr"></div>
<div id="popup">
<div class="hd"><span>(1 of 2)</span>
<svg width="70" height="25" style="position:absolute;left:270px;top:0" viewBox="0 0 70 25"><path d="M4,7.5L14,13L4,18.5Z" fill="#fff"/><rect x="33" y="8" width="12" height="10" fill="none" stroke="#fff" stroke-width="1.8"/><rect x="32.2" y="7" width="13.6" height="3" fill="#fff"/><path d="M56,7.5L67,18.5M67,7.5L56,18.5" stroke="#fff" stroke-width="2.2" fill="none"/></svg>
</div>
<div class="ttl">2023 Roll Number: 444202001900101</div>
<div class="hr"></div>
<div class="row" style="top:77px">Roll Number</div><div class="val" style="top:77px">444202001900101</div>
<div class="row" style="top:104px">Street Number:</div>
<div class="row" style="top:131.5px">Street Qua. :</div>
<div class="row" style="top:159px">Street Name:</div><div class="val" style="top:159px">L15C6CH</div>
<div class="row" style="top:186px">Street Unit:</div>
<div class="zoom">Zoom to</div>
<svg class="dots" width="24" height="8" viewBox="0 0 24 8"><circle cx="3.5" cy="4" r="2.6" fill="#7b7b7b"/><circle cx="11.5" cy="4" r="2.6" fill="#7b7b7b"/><circle cx="19.5" cy="4" r="2.6" fill="#7b7b7b"/></svg>
</div>
<div id="legend">
<div class="t" style="left:22px;top:-13px">Overlays and Cold Water Lakes &amp; Streams</div>
<div class="t" style="left:40px;top:16.8px">Natural Contraints 1</div>
<div class="t" style="left:40px;top:75.8px">Natural Constraints 2</div>
<div class="t" style="left:40px;top:135px">Cold Water Streams</div>
<div class="t" style="left:40px;top:194px">Cold Water Lakes</div>
<div class="t" style="left:40px;top:253.2px">Flood Overlay</div>
<svg width="30" height="300" style="position:absolute;left:48px;top:0" viewBox="0 0 30 300">
<defs><clipPath id="c1"><rect x="3" y="40.5" width="20" height="20"/></clipPath><clipPath id="c5"><rect x="2" y="277" width="20" height="20"/></clipPath></defs>
<rect x="3" y="40.5" width="20" height="20" fill="#fff"/>
<g clip-path="url(#c1)" stroke="#2f8a1a" stroke-width="3.4"><path d="M-5,57.5L13,35.5M1,63.5L21,39.5M9,67.5L29,43.5M-11,51.5L7,29.5M17,71.5L35,49.5"/></g>
<rect x="3" y="40.5" width="20" height="20" fill="none" stroke="#2f8a1a" stroke-width="1.6"/>
<rect x="2" y="99" width="20" height="20" fill="#fff" stroke="#6f8a12" stroke-width="2" rx="1"/>
<g fill="#6f8a12"><rect x="3" y="103" width="2" height="2"/><rect x="11" y="103" width="2" height="2"/><rect x="19" y="103" width="2" height="2"/><rect x="3" y="112" width="2" height="2"/><rect x="11" y="112" width="2" height="2"/><rect x="19" y="112" width="2" height="2"/></g>
<path d="M1,168L24,168" stroke="#22b6ee" stroke-width="2"/>
<rect x="2" y="218" width="20" height="20" fill="#19b6f5" stroke="#5f8fb0" stroke-width="1"/>
<rect x="2" y="277" width="20" height="20" fill="#fff"/>
<g clip-path="url(#c5)" stroke="#e0622a" stroke-width="1.2"><path d="M-4,283L16,303M2,277L22,297M8,271L28,291M-4,291L16,271M2,297L22,277M8,303L28,283"/></g>
<rect x="2" y="277" width="20" height="20" fill="none" stroke="#e0622a" stroke-width="2" rx="1"/>
</svg>
<div class="t" style="left:21px;top:312.8px">Precincts</div>
<div class="sw" style="left:31px;top:336.0px;background:#c9870c"></div><div class="t" style="left:66px;top:339.3px">Urban Residential - Shoreline</div>
<div class="sw" style="left:31px;top:365.2px;background:#f2f21a"></div><div class="t" style="left:66px;top:368.5px">Urban Residential - Low</div>
<div class="sw" style="left:31px;top:394.4px;background:#cfcf0e"></div><div class="t" style="left:66px;top:397.7px">Urban Residential - Medium</div>
<div class="sw" style="left:31px;top:423.7px;background:#ebb40c"></div><div class="t" style="left:66px;top:427.0px">Urban Residential - High</div>
<div class="sw" style="left:31px;top:452.9px;background:#e8d28e"></div><div class="t" style="left:66px;top:456.2px">Community Residential</div>
<div class="sw" style="left:31px;top:482.1px;background:#4f8e12"></div><div class="t" style="left:66px;top:485.4px">Waterfront Residential - 60 Metres</div>
<div class="sw" style="left:31px;top:511.3px;background:#b9cb6e"></div><div class="t" style="left:66px;top:514.6px">Waterfront Residential - 120 Metres</div>
<div class="sw" style="left:31px;top:540.5px;background:#dff762"></div><div class="t" style="left:66px;top:543.8px">Waterfront Backlot</div>
<div class="sw" style="left:31px;top:569.8px;background:#ffaa7e"></div><div class="t" style="left:66px;top:573.1px">Waterfront Commercial</div>
<div class="sw" style="left:31px;top:599.0px;background:#e2838a"></div><div class="t" style="left:66px;top:602.3px">Regional Commercial</div>
<div class="sw" style="left:31px;top:628.2px;background:#ff0000"></div><div class="t" style="left:66px;top:631.5px">Central Business District</div>
<div class="sw" style="left:31px;top:657.4px;background:#ff9b9b"></div><div class="t" style="left:66px;top:660.7px">Urban Business Employment</div>
<div class="sw" style="left:31px;top:686.6px;background:#0f968a"></div><div class="t" style="left:66px;top:689.9px">Urban Mixed Use</div>
<div class="sw" style="left:31px;top:715.9px;background:#10cbbb"></div><div class="t" style="left:66px;top:719.2px">Community Mixed Use</div>
<div class="sw" style="left:31px;top:745.1px;background:#85c8f2"></div><div class="t" style="left:66px;top:748.4px">Community and Rural Business Employment</div>
<div class="sw" style="left:31px;top:774.3px;background:#7b2806"></div><div class="t" style="left:66px;top:777.6px">Heavy Employment</div>
<div class="sw" style="left:31px;top:803.5px;background:#8d6a38"></div><div class="t" style="left:66px;top:806.8px">Recreational Resort Commercial</div>
<div class="sw" style="left:31px;top:832.7px;background:#e2a189"></div><div class="t" style="left:66px;top:836.0px">Recreational Resort Residential</div>
<div class="sw" style="left:31px;top:862.0px;background:#dedede"></div><div class="t" style="left:66px;top:865.3px">Rural</div>
</div>
</body></html>
